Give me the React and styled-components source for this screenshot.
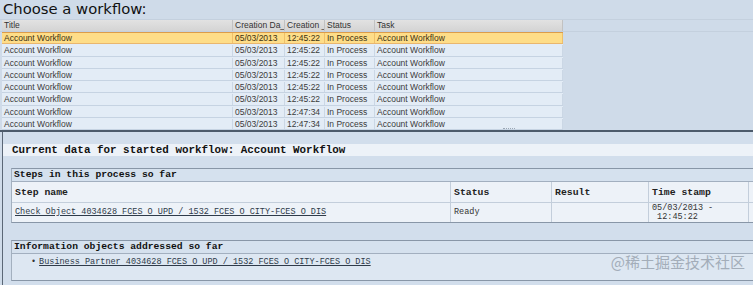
import React from "react";
import styled, { createGlobalStyle } from "styled-components";

const GlobalStyle = createGlobalStyle`
  html, body {
    margin: 0;
    padding: 0;
    background: #cfdbe9;
    overflow: hidden;
  }
`;

const Page = styled.div`
  position: relative;
  width: 753px;
  height: 285px;
  display: flex;
  flex-direction: column;
  overflow: hidden;
  font-family: "Liberation Sans", Arial, sans-serif;
`;

// Top pane: list of workflows
const TopPane = styled.div`
  height: 132px;
  display: flex;
  flex-direction: column;
`;

const Heading = styled.div`
  height: 19px;
  line-height: 18px;
  padding-left: 3px;
  font-family: "DejaVu Sans", sans-serif;
  font-size: 14.8px;
  color: #111;
`;

const HeaderStrip = styled.div`
  display: flex;
  height: 13px;
  flex-shrink: 0;
  border-top: 1px solid #c4d0de;
  border-bottom: 1px solid #c4d0de;
  box-sizing: border-box;
`;

const Grid = styled.div`
  display: grid;
  grid-template-columns: 231px 52px 40px 50px 188px;
  margin-left: 2px;
  width: 561px;
`;

const HeadCell = styled.div`
  height: 11px;
  line-height: 11px;
  padding-left: 2px;
  font-size: 8.5px;
  color: #333;
  white-space: nowrap;
  overflow: hidden;
  background: linear-gradient(#e2e2e2, #d4d4d4);
  border-right: 1px solid #c2c2c2;
`;

const Row = styled.div`
  display: grid;
  grid-template-columns: 231px 52px 40px 50px 188px;
  margin-left: 2px;
  width: 561px;
  height: 12.25px;
  flex-shrink: 0;
  box-sizing: border-box;
  background: ${({ $selected }) => ($selected ? "#fedd88" : "#e3ecf6")};
  border-top: 1px solid ${({ $selected }) => ($selected ? "#dc9c4a" : "transparent")};
  border-bottom: 1px solid ${({ $selected }) => ($selected ? "#e9b66e" : "#c6d3e2")};
`;

const Cell = styled.div`
  line-height: 10px;
  padding-left: 2px;
  font-size: 8.5px;
  color: ${({ $selected }) => ($selected ? "#3d3210" : "#3b3b3b")};
  white-space: nowrap;
  overflow: hidden;
  border-right: 1px solid ${({ $selected }) => ($selected ? "#efc06a" : "#cbd7e5")};
`;

const Splitter = styled.div`
  position: relative;
  margin-top: auto;
  height: 2px;
  flex-shrink: 0;
  background: #4d5b6b;
`;

const Grip = styled.div`
  position: absolute;
  left: 503px;
  top: -2px;
  width: 12px;
  height: 1px;
  border-top: 1px dotted #9aa6b4;
`;

// Bottom pane: HTML view of the workflow
const BottomPane = styled.div`
  flex: 1;
  margin-left: 2px;
  border-left: 1px solid #5b6776;
  background: #d2deec;
  display: flex;
  flex-direction: column;
  font-family: "Liberation Mono", "Courier New", monospace;
`;

const Band = styled.div`
  height: ${({ $h }) => $h}px;
  flex-shrink: 0;
`;

const TitleBand = styled.div`
  height: 12px;
  line-height: 12px;
  padding-left: 9px;
  background: #edf2f8;
  font-weight: bold;
  font-size: 10.9px;
  color: #111;
  white-space: nowrap;
`;

const Box = styled.div`
  margin-left: 8px;
  width: 820px;
  border-top: 1px solid #8896a7;
  border-bottom: 1px solid #8896a7;
  border-left: 1px solid #a3b0bf;
  flex-shrink: 0;
`;

const BoxHeader = styled.div`
  height: 12px;
  line-height: 12px;
  padding-left: 2px;
  background: #d5e1ee;
  border-bottom: 1px solid #a2afbf;
  font-weight: bold;
  font-size: 9.7px;
  color: #111;
  white-space: nowrap;
`;

const StepGrid = styled.div`
  display: grid;
  grid-template-columns: 439px 101px 97px 100px 83px;
  grid-template-rows: 21px 19px;
  background: #edf2f8;
`;

const StepHead = styled.div`
  display: flex;
  align-items: center;
  padding-left: 3px;
  border-right: 1px solid #c3cedb;
  border-bottom: 1px solid #c3cedb;
  font-weight: bold;
  font-size: 9.8px;
  color: #222;
  white-space: nowrap;
  overflow: hidden;
`;

const StepCell = styled.div`
  display: flex;
  align-items: center;
  padding-left: 3px;
  border-right: 1px solid #c3cedb;
  font-size: 8.5px;
  line-height: 9px;
  color: #333;
  white-space: pre;
  overflow: hidden;
`;

const Link = styled.span`
  text-decoration: underline;
  color: #2f3b4a;
`;

const InfoBody = styled.div`
  height: 26px;
  background: #dde7f2;
  padding: 3px 0 0 19px;
  box-sizing: border-box;
  font-size: 8.5px;
  line-height: 10px;
  color: #333;
  white-space: nowrap;
`;

const Bullet = styled.span`
  margin-right: 3px;
`;

const Watermark = styled.div`
  position: absolute;
  right: 8px;
  bottom: 13px;
  font-family: "Noto Sans CJK SC", sans-serif;
  font-size: 15px;
  color: #a3adb9;
`;

const workflows = [
  ["05/03/2013", "12:45:22"],
  ["05/03/2013", "12:45:22"],
  ["05/03/2013", "12:45:22"],
  ["05/03/2013", "12:45:22"],
  ["05/03/2013", "12:45:22"],
  ["05/03/2013", "12:45:22"],
  ["05/03/2013", "12:47:34"],
  ["05/03/2013", "12:47:34"],
];

const columns = ["Title", "Creation Da_", "Creation _", "Status", "Task"];

export default function App() {
  return (
    <Page>
      <GlobalStyle />
      <TopPane>
        <Heading>Choose a workflow:</Heading>
        <HeaderStrip>
          <Grid>
            {columns.map((c) => (
              <HeadCell key={c}>{c}</HeadCell>
            ))}
          </Grid>
        </HeaderStrip>
        {workflows.map(([date, time], i) => (
          <Row key={i} $selected={i === 0}>
            <Cell $selected={i === 0}>Account Workflow</Cell>
            <Cell $selected={i === 0}>{date}</Cell>
            <Cell $selected={i === 0}>{time}</Cell>
            <Cell $selected={i === 0}>In Process</Cell>
            <Cell $selected={i === 0}>Account Workflow</Cell>
          </Row>
        ))}
        <Splitter>
          <Grip />
        </Splitter>
      </TopPane>

      <BottomPane>
        <Band $h={12} />
        <TitleBand>Current data for started workflow: Account Workflow</TitleBand>
        <Band $h={12} />
        <Box>
          <BoxHeader>Steps in this process so far</BoxHeader>
          <StepGrid>
            <StepHead>Step name</StepHead>
            <StepHead>Status</StepHead>
            <StepHead>Result</StepHead>
            <StepHead>Time stamp</StepHead>
            <StepHead />
            <StepCell>
              <Link>Check Object 4034628 FCES O UPD / 1532 FCES O CITY-FCES O DIS</Link>
            </StepCell>
            <StepCell>Ready</StepCell>
            <StepCell />
            <StepCell>{"05/03/2013 -\n 12:45:22"}</StepCell>
            <StepCell />
          </StepGrid>
        </Box>
        <Band $h={17} />
        <Box>
          <BoxHeader>Information objects addressed so far</BoxHeader>
          <InfoBody>
            <Bullet>•</Bullet>
            <Link>Business Partner 4034628 FCES O UPD / 1532 FCES O CITY-FCES O DIS</Link>
          </InfoBody>
        </Box>
      </BottomPane>
      <Watermark>@稀土掘金技术社区</Watermark>
    </Page>
  );
}
